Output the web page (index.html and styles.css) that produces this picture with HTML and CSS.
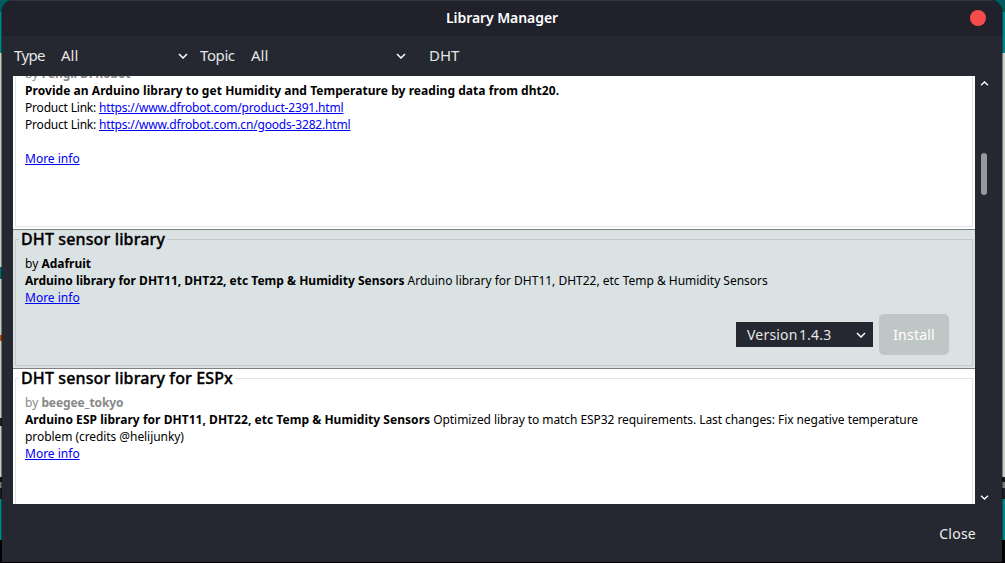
FILE: index.html
```html
<!DOCTYPE html>
<html lang="en">
<head>
<meta charset="utf-8">
<title>Library Manager</title>
<link rel="stylesheet" href="styles.css">
</head>
<body>
<div class="desktop">
  <div class="window">
    <header class="titlebar">
      <h1 class="title">Library Manager</h1>
      <button class="close-dot" aria-label="Close window"></button>
    </header>
    <div class="filters">
      <span class="label type-label">Type</span>
      <div class="select type-select"><span>All</span><svg class="chev" viewBox="0 0 10 6"><path d="M1 1l4 4 4-4"/></svg></div>
      <span class="label topic-label">Topic</span>
      <div class="select topic-select"><span>All</span><svg class="chev" viewBox="0 0 10 6"><path d="M1 1l4 4 4-4"/></svg></div>
      <span class="search">DHT</span>
    </div>
    <div class="body">
      <div class="list">
        <section class="item first">
          <fieldset class="box">
            <p class="line muted">by <b class="author">Fengli DFRobot</b></p>
            <p class="line"><b class="summary-dht20">Provide an Arduino library to get Humidity and Temperature by reading data from dht20.</b></p>
            <p class="line"><span class="product">Product Link: </span><a class="url">https://www.dfrobot.com/product-2391.html</a></p>
            <p class="line"><span class="product">Product Link: </span><a class="url">https://www.dfrobot.com.cn/goods-3282.html</a></p>
            <p class="line">&nbsp;</p>
            <p class="line"><a class="more">More info</a></p>
          </fieldset>
        </section>
        <section class="item selected">
          <fieldset class="box">
            <legend>DHT sensor library</legend>
            <p class="line">by <b>Adafruit</b></p>
            <p class="line"><b class="summary-dht">Arduino library for DHT11, DHT22, etc Temp &amp; Humidity Sensors</b> <span class="detail-dht">Arduino library for DHT11, DHT22, etc Temp &amp; Humidity Sensors</span></p>
            <p class="line"><a class="more">More info</a></p>
            <div class="actions">
              <div class="version"><span class="version-text">Version 1.4.3</span><svg class="chev" viewBox="0 0 10 6"><path d="M1 1l4 4 4-4"/></svg></div>
              <button class="install">Install</button>
            </div>
          </fieldset>
        </section>
        <section class="item">
          <fieldset class="box">
            <legend>DHT sensor library for ESPx</legend>
            <p class="line muted">by <b class="author">beegee_tokyo</b></p>
            <p class="line"><b class="summary-esp">Arduino ESP library for DHT11, DHT22, etc Temp &amp; Humidity Sensors</b> <span class="detail-esp">Optimized libray to match ESP32 requirements. Last changes: Fix negative temperature</span></p>
            <p class="line"><span class="detail-esp">problem (credits @helijunky)</span></p>
            <p class="line"><a class="more">More info</a></p>
          </fieldset>
        </section>
      </div>
      <div class="scrollbar">
        <svg class="arrow" viewBox="0 0 9 5"><path d="M1 4.3l3.5-3.3 3.5 3.3"/></svg>
        <div class="thumb"></div>
        <svg class="arrow" viewBox="0 0 9 5"><path d="M1 .7l3.5 3.3 3.5-3.3"/></svg>
      </div>
    </div>
    <footer class="footer"><button class="close">Close</button></footer>
  </div>
</div>
</body>
</html>
```
FILE: styles.css
```css
* { box-sizing: border-box; }
body { margin: 0; overflow: hidden; font-family: "Noto Sans", sans-serif; }
button { font-family: inherit; border: 0; padding: 0; }
.desktop {
  width: 1005px; height: 563px; padding: 0 3px 1px 2px;
  background:
    linear-gradient(transparent 267px, #00696b 267px 279px, transparent 279px 335px, #b94b08 335px 341px, transparent 341px 418px, #222 418px 426px, transparent 426px) 0 0 / 2px 563px no-repeat,
    linear-gradient(#005c5f 0 12px, #00878a 12px 53px, #c9c9c4 53px 477px, #16171d 477px 482px, #77787a 482px 488px, #1c1d24 488px 499px, #00878a 499px 540px, #000 540px);
}
.window {
  width: 1000px; height: 562px; display: flex; flex-direction: column;
  background: #252731; border-radius: 13px 13px 0 0; overflow: hidden;
  box-shadow: 0 0 0 1px rgba(0, 0, 0, .4);
}
.titlebar {
  height: 36px; flex: none; background: #20212a; border-top: 1px solid #35363e;
  display: flex; align-items: center; padding: 0 16px 2px 444px; justify-content: space-between;
}
.title { margin: 0; font-size: 14px; line-height: 20px; font-weight: 600; letter-spacing: -.07px; color: #fff; white-space: nowrap; }
.close-dot { width: 16px; height: 16px; border-radius: 50%; background: #f74c4c; }
.filters {
  height: 40px; flex: none; display: flex; align-items: center; padding: 0 0 2px 12px;
  font-size: 15px; line-height: 20px; color: #e6e6e6; white-space: nowrap;
}
.label { letter-spacing: -.6px; }
.type-label { width: 47px; }
.topic-label { width: 51px; letter-spacing: -.4px; }
.select { display: flex; justify-content: space-between; align-items: center; }
.type-select { width: 127px; margin-right: 12px; }
.topic-select { width: 155px; margin-right: 23px; }
.chev { width: 10px; height: 6px; fill: none; stroke: #fff; stroke-width: 1.5; position: relative; top: 1px; }
.version .chev { top: 0; }
.body { height: 428px; flex: none; display: flex; padding-left: 11px; }
.list { width: 962px; background: #fff; overflow: hidden; }
.item { height: 139px; padding: 0 2px 2px; border-bottom: 1px solid #7d7f80; }
.first { height: 154px; }
.box { margin: 0; height: 136px; min-width: 0; border: 1px solid #e3e5e5; padding: 6px 9px 0; }
.first .box { height: 151px; border-top: 0; padding-top: 0; }
.first .line:first-child { margin-top: -11px; }
.selected { background: #dae2e3; }
.selected .box { border-color: #c1cbca; }
legend {
  height: 19px; line-height: 19px; padding: 0 2px; margin-left: -6px;
  font-size: 16px; font-weight: 500; letter-spacing: .13px; color: #000;
  -webkit-text-stroke: .35px #000; white-space: nowrap;
}
.line { margin: 0; height: 17px; line-height: 17px; font-size: 12px; color: #000; white-space: nowrap; }
.line.muted { color: #888; }
.author { letter-spacing: -.1px; }
.summary-dht20 { letter-spacing: .052px; }
.summary-dht { letter-spacing: .012px; }
.summary-esp { letter-spacing: .038px; }
.detail-dht { letter-spacing: -.012px; }
.detail-esp { letter-spacing: -.067px; }
.product { letter-spacing: -.2px; }
.url { letter-spacing: -.175px; }
a { color: #0000f4; text-decoration: underline; }
.actions { display: flex; justify-content: flex-end; align-items: center; gap: 6px; margin-top: 8px; padding-right: 14px; height: 41px; }
.version {
  width: 137px; height: 25px; background: #252731; color: #e6e6e6; font-size: 14px;
  display: flex; align-items: center; justify-content: space-between; padding: 0 7px 0 11px; white-space: nowrap;
}
.version-text { letter-spacing: .2px; word-spacing: -2.6px; }
.install { width: 70px; height: 41px; border-radius: 5px; background: #bfc7c6; color: #fff; font-size: 14px; letter-spacing: .2px; }
.scrollbar { width: 24px; display: flex; flex-direction: column; align-items: center; padding: 5px 6px 4px 0; }
.arrow { width: 9px; height: 5px; fill: none; stroke: #fff; stroke-width: 1.3; }
.thumb { width: 6px; height: 42px; border-radius: 3px; background: #98999d; margin: 67px 0 auto; }
.footer { flex: 1; display: flex; justify-content: flex-end; align-items: center; padding-right: 26px; }
.close { background: none; color: #f0f0f0; font-size: 14px; letter-spacing: .25px; }
```
